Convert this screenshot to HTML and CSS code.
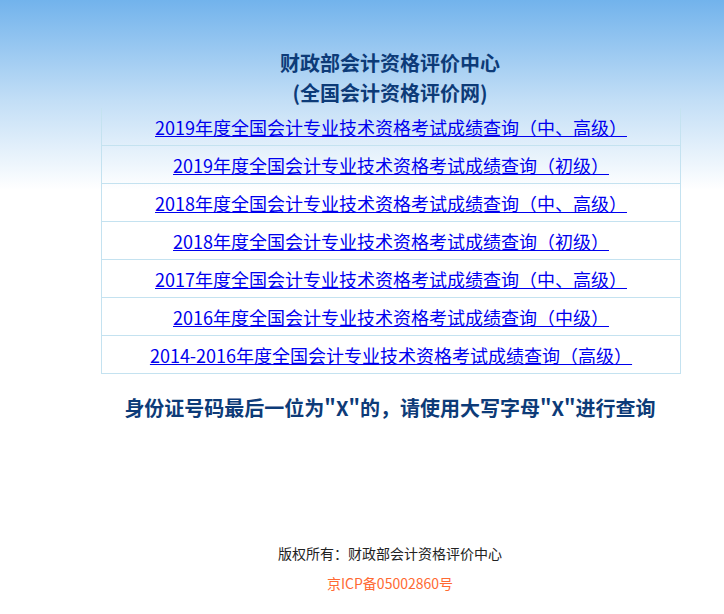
FILE: index.html
```html
<!DOCTYPE html>
<html lang="zh-CN">
<head>
<meta charset="utf-8">
<title>财政部会计资格评价中心</title>
<link rel="stylesheet" href="styles.css">
</head>
<body>
<div class="page">
  <div class="header">
    <div class="title">财政部会计资格评价中心</div>
    <div class="title">(全国会计资格评价网)</div>
  </div>
  <div class="links">
    <div class="row"><a href="#">2019年度全国会计专业技术资格考试成绩查询（中、高级）</a></div>
    <div class="row"><a href="#">2019年度全国会计专业技术资格考试成绩查询（初级）</a></div>
    <div class="row"><a href="#">2018年度全国会计专业技术资格考试成绩查询（中、高级）</a></div>
    <div class="row"><a href="#">2018年度全国会计专业技术资格考试成绩查询（初级）</a></div>
    <div class="row"><a href="#">2017年度全国会计专业技术资格考试成绩查询（中、高级）</a></div>
    <div class="row"><a href="#">2016年度全国会计专业技术资格考试成绩查询（中级）</a></div>
    <div class="row"><a href="#">2014-2016年度全国会计专业技术资格考试成绩查询（高级）</a></div>
  </div>
  <div class="notice">身份证号码最后一位为"X"的，请使用大写字母"X"进行查询</div>
  <div class="footer">
    <div class="copy">版权所有：财政部会计资格评价中心</div>
    <div class="icp">京ICP备05002860号</div>
  </div>
</div>
</body>
</html>
```
FILE: styles.css
```css
html {
  background: #fff;
}
body {
  margin: 0;
  min-height: 614px;
  background: linear-gradient(to bottom, #72b3ec 0px, #c2def6 100px, #ffffff 190px) no-repeat;
  background-size: 100% 190px;
  background-color: #fff;
  font-family: "Noto Sans CJK SC", "Noto Sans", sans-serif;
}
.page {
  width: 668px;
  margin-left: 56px;
}
.header {
  padding-top: 48px;
  text-align: center;
}
.title {
  font-size: 20px;
  font-weight: bold;
  line-height: 30px;
  color: #0d3b78;
}
.links {
  width: 578px;
  margin-left: 45px;
  border-left: 1px solid #c4e2f0;
  border-right: 1px solid #c4e2f0;
}
.row {
  height: 37px;
  border-bottom: 1px solid #c4e2f0;
  display: flex;
  align-items: center;
  justify-content: center;
}
.row a {
  font-size: 18px;
  color: #0000ee;
  text-decoration: underline;
  line-height: 24px;
}
.notice {
  margin-top: 19px;
  text-align: center;
  font-size: 20px;
  font-weight: bold;
  line-height: 30px;
  color: #0d3b78;
}
.footer {
  margin-top: 115px;
  text-align: center;
  font-size: 14px;
  line-height: 30px;
}
.copy {
  color: #222;
}
.icp {
  color: #ff6a33;
}
```
